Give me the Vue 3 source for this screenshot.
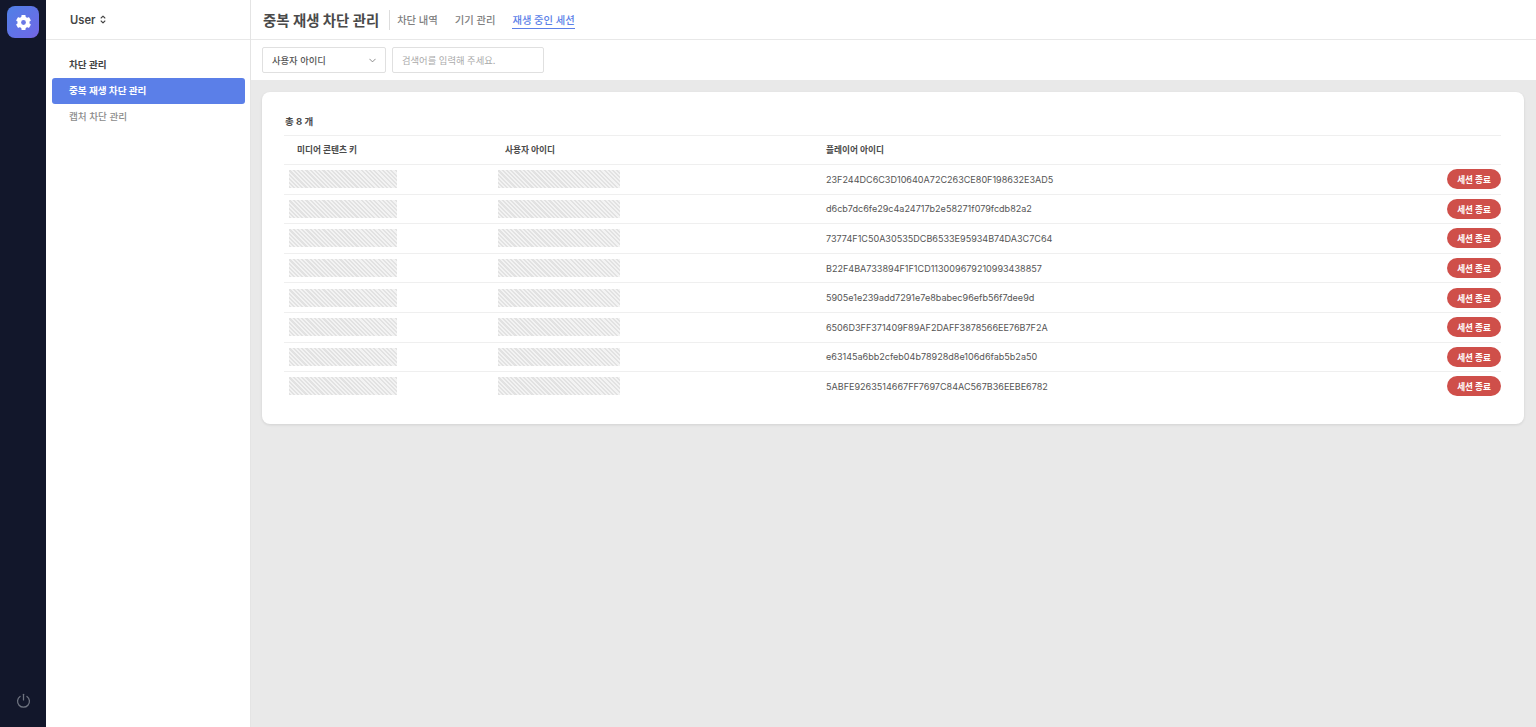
<template>
  <div class="layout">
    <aside class="rail">
      <div class="logo">
        <svg viewBox="0 0 24 24" width="17" height="17" fill="#fff">
          <circle cx="12" cy="12" r="8.500" />
          <rect x="9" y="1.500" width="6" height="21" rx="1" />
          <rect x="9" y="1.500" width="6" height="21" rx="1" transform="rotate(60 12 12)" />
          <rect x="9" y="1.500" width="6" height="21" rx="1" transform="rotate(120 12 12)" />
          <circle cx="12" cy="12" r="3.400" fill="#6a78e6" />
        </svg>
      </div>
      <svg class="power" viewBox="0 0 24 24" width="15" height="15" fill="none" stroke="#6f7480" stroke-width="2" stroke-linecap="round">
        <path d="M12 2v9" />
        <path d="M6.500 5.500a9.500 9.500 0 1 0 11 0" />
      </svg>
    </aside>

    <nav class="side">
      <div class="side-head">
        <span class="user">User</span>
        <svg viewBox="0 0 8 12" width="6" height="9" fill="none" stroke="#444" stroke-width="1.500" stroke-linecap="round" stroke-linejoin="round">
          <path d="M1.500 4L4 1.500 6.500 4" />
          <path d="M1.500 8L4 10.500 6.500 8" />
        </svg>
      </div>
      <div class="side-body">
        <div class="group">차단 관리</div>
        <a class="item active">중복 재생 차단 관리</a>
        <a class="item">캡처 차단 관리</a>
      </div>
    </nav>

    <main class="main">
      <header class="top">
        <h1 class="title">중복 재생 차단 관리</h1>
        <span class="divider"></span>
        <div class="tabs">
          <a v-for="tab in tabs" :key="tab" class="tab" :class="{ on: tab === activeTab }">{{ tab }}</a>
        </div>
      </header>

      <div class="filters">
        <div class="select">
          <span>사용자 아이디</span>
          <svg viewBox="0 0 10 6" width="7" height="5" fill="none" stroke="#777" stroke-width="1.200" stroke-linecap="round" stroke-linejoin="round">
            <path d="M1 1l4 4 4-4" />
          </svg>
        </div>
        <input class="search" placeholder="검색어를 입력해 주세요." />
      </div>

      <section class="content">
        <div class="card">
          <div class="total">총 8 개</div>
          <div class="row head">
            <div class="c1">미디어 콘텐츠 키</div>
            <div class="c2">사용자 아이디</div>
            <div class="c3">플레이어 아이디</div>
          </div>
          <div v-for="id in players" :key="id" class="row">
            <div class="c1"><span class="mask short"></span></div>
            <div class="c2"><span class="mask long"></span></div>
            <div class="c3">{{ id }}</div>
            <button class="end">세션 종료</button>
          </div>
        </div>
      </section>
    </main>
  </div>
</template>

<script setup>
const tabs = ['차단 내역', '기기 관리', '재생 중인 세션'];
const activeTab = '재생 중인 세션';

const players = [
  '23F244DC6C3D10640A72C263CE80F198632E3AD5',
  'd6cb7dc6fe29c4a24717b2e58271f079fcdb82a2',
  '73774F1C50A30535DCB6533E95934B74DA3C7C64',
  'B22F4BA733894F1F1CD113009679210993438857',
  '5905e1e239add7291e7e8babec96efb56f7dee9d',
  '6506D3FF371409F89AF2DAFF3878566EE76B7F2A',
  'e63145a6bb2cfeb04b78928d8e106d6fab5b2a50',
  '5ABFE9263514667FF7697C84AC567B36EEBE6782',
];
</script>

<style>
html,
body {
  margin: 0;
  height: 100%;
}
</style>

<style scoped>
.layout {
  display: flex;
  height: 727px;
  overflow: hidden;
  font-family: Inter, 'Noto Sans CJK KR', sans-serif;
  color: #444;
  background: #fff;
}

.rail {
  width: 46px;
  flex: none;
  background: #12172b;
  display: flex;
  flex-direction: column;
  align-items: center;
  justify-content: space-between;
  padding: 6px 0 19px;
  box-sizing: border-box;
}

.logo {
  width: 32px;
  height: 32px;
  border-radius: 8px;
  background: linear-gradient(135deg, #4f80e6, #6a6ce6 80%, #7a62e0);
  display: flex;
  align-items: center;
  justify-content: center;
}

.side {
  width: 205px;
  flex: none;
  box-sizing: border-box;
  border-right: 1px solid #e4e4e4;
}

.side-head {
  height: 40px;
  box-sizing: border-box;
  border-bottom: 1px solid #e8e8e8;
  padding-left: 24px;
  display: flex;
  align-items: center;
  gap: 5px;
}

.user {
  font-size: 11.200px;
  font-weight: 600;
  color: #444;
}

.side-body {
  padding: 11px 5px 0 6px;
}

.group {
  height: 27px;
  line-height: 27px;
  padding-left: 17px;
  font-size: 9.600px;
  font-weight: 700;
  color: #444;
}

.item {
  display: block;
  height: 26px;
  line-height: 25px;
  padding-left: 17px;
  font-size: 9.600px;
  font-weight: 500;
  color: #8c8c8c;
  border-radius: 3px;
}

.item.active {
  background: #5b7fe8;
  color: #fff;
  font-weight: 700;
}

.main {
  flex: 1;
  min-width: 0;
  display: flex;
  flex-direction: column;
}

.top {
  height: 40px;
  flex: none;
  box-sizing: border-box;
  border-bottom: 1px solid #e8e8e8;
  padding-left: 12px;
  display: flex;
  align-items: center;
}

.title {
  margin: 0;
  font-size: 14.400px;
  font-weight: 700;
  color: #4a4a4a;
}

.divider {
  width: 1px;
  height: 20px;
  background: #ddd;
  margin: 1px 7.500px 0 9.500px;
}

.tabs {
  display: flex;
  gap: 17px;
  margin-top: 3px;
}

.tab {
  font-size: 10.300px;
  font-weight: 500;
  color: #808080;
  line-height: 15px;
  border-bottom: 1.500px solid transparent;
}

.tab.on {
  color: #5b7fe8;
  border-bottom-color: #5b7fe8;
}

.filters {
  height: 40px;
  flex: none;
  box-sizing: border-box;
  padding: 7px 0 0 11px;
  display: flex;
  gap: 6px;
}

.select,
.search {
  height: 26px;
  box-sizing: border-box;
  border: 1px solid #e0e0e0;
  border-radius: 2px;
  font-family: inherit;
  font-size: 9.300px;
  background: #fff;
}

.select {
  width: 124px;
  padding: 0 9px;
  display: flex;
  align-items: center;
  justify-content: space-between;
  color: #555;
  font-weight: 500;
}

.search {
  width: 152px;
  padding: 0 9px;
  outline: none;
}

.search::placeholder {
  color: #aaa;
}

.content {
  flex: 1;
  background: #e9e9e9;
  padding: 12px 12px 0 10.500px;
}

.card {
  background: #fff;
  border-radius: 8px;
  box-shadow: 0 1px 3px rgba(0, 0, 0, 0.1);
  padding: 20px 23px 23.500px 22.500px;
}

.total {
  height: 23px;
  line-height: 20px;
  padding-left: 1px;
  font-size: 9.500px;
  font-weight: 700;
  color: #4a4a4a;
}

.row {
  height: 29.600px;
  box-sizing: border-box;
  display: flex;
  align-items: center;
  border-top: 1px solid #efefef;
  font-size: 9.050px;
  color: #555;
}

.row.head {
  height: 29px;
  padding-bottom: 1px;
  font-weight: 700;
  color: #4a4a4a;
  font-size: 8.700px;
}

.c1 {
  width: 214px;
  flex: none;
  padding-left: 5px;
  box-sizing: border-box;
}

.c2 {
  width: 328px;
  flex: none;
}

.head .c1 {
  width: 221px;
  padding-left: 13px;
}

.head .c2 {
  width: 321px;
}

.mask {
  display: block;
  height: 18px;
  background: repeating-linear-gradient(45deg, #e2e2e2 0 1.500px, #f3f3f3 1.500px 3px);
}

.short {
  width: 108px;
}

.long {
  width: 122px;
}

.end {
  margin-left: auto;
  width: 54px;
  height: 20px;
  padding: 0;
  border: none;
  border-radius: 10px;
  background: #cf4f4a;
  color: #fff;
  font-family: inherit;
  font-size: 8.600px;
  font-weight: 700;
}
</style>
